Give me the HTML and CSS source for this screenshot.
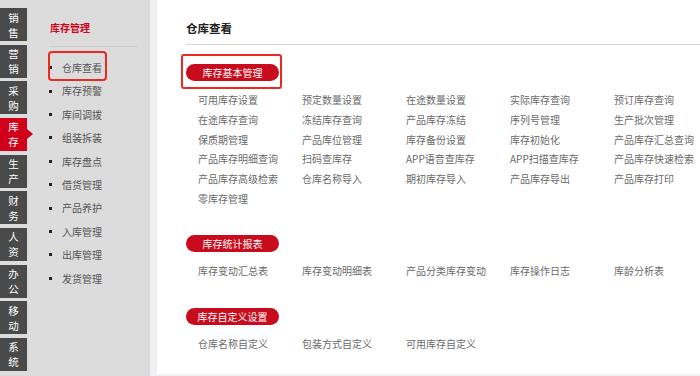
FILE: index.html
```html
<!DOCTYPE html>
<html lang="zh-CN">
<head>
  <meta charset="UTF-8" />
  <title>仓库查看</title>
  <link rel="stylesheet" href="styles.css">
</head>
<body>
  <div class="page">
    <aside class="nav">
      <ul class="tabs">
        <li>销<br>售</li>
        <li>营<br>销</li>
        <li>采<br>购</li>
        <li class="active">库<br>存</li>
        <li>生<br>产</li>
        <li>财<br>务</li>
        <li>人<br>资</li>
        <li>办<br>公</li>
        <li>移<br>动</li>
        <li>系<br>统</li>
      </ul>
      <div class="submenu">
        <h3>库存管理</h3>
        <ul>
          <li class="current">仓库查看</li>
          <li>库存预警</li>
          <li>库间调拨</li>
          <li>组装拆装</li>
          <li>库存盘点</li>
          <li>借货管理</li>
          <li>产品养护</li>
          <li>入库管理</li>
          <li>出库管理</li>
          <li>发货管理</li>
        </ul>
      </div>
    </aside>

    <main class="content">
      <h2>仓库查看</h2>

      <section class="group">
        <span class="pill focus">库存基本管理</span>
        <ul class="links">
          <li>可用库存设置</li>
          <li>预定数量设置</li>
          <li>在途数量设置</li>
          <li>实际库存查询</li>
          <li>预订库存查询</li>
          <li>在途库存查询</li>
          <li>冻结库存查询</li>
          <li>产品库存冻结</li>
          <li>序列号管理</li>
          <li>生产批次管理</li>
          <li>保质期管理</li>
          <li>产品库位管理</li>
          <li>库存备份设置</li>
          <li>库存初始化</li>
          <li>产品库存汇总查询</li>
          <li>产品库存明细查询</li>
          <li>扫码查库存</li>
          <li>APP语音查库存</li>
          <li>APP扫描查库存</li>
          <li>产品库存快速检索</li>
          <li>产品库存高级检索</li>
          <li>仓库名称导入</li>
          <li>期初库存导入</li>
          <li>产品库存导出</li>
          <li>产品库存打印</li>
          <li>零库存管理</li>
        </ul>
      </section>

      <section class="group">
        <span class="pill">库存统计报表</span>
        <ul class="links">
          <li>库存变动汇总表</li>
          <li>库存变动明细表</li>
          <li>产品分类库存变动</li>
          <li>库存操作日志</li>
          <li>库龄分析表</li>
        </ul>
      </section>

      <section class="group">
        <span class="pill">库存自定义设置</span>
        <ul class="links">
          <li>仓库名称自定义</li>
          <li>包装方式自定义</li>
          <li>可用库存自定义</li>
        </ul>
      </section>
    </main>
  </div>
</body>
</html>
```

FILE: styles.css
```css
body {
  margin: 0;
  font-family: "Noto Sans CJK SC", "Noto Sans", sans-serif;
  background-color: #f1f1f3;
}

ul {
  list-style: none;
  margin: 0;
  padding: 0;
}

.page {
  display: flex;
  height: 376px;
}

/* left navigation */
.nav {
  display: flex;
  flex-shrink: 0;
  width: 150px;
  background-color: #dcdcdc;
}

.tabs {
  display: flex;
  flex-direction: column;
  gap: 3.67px;
  width: 27px;
  padding-top: 8px;
}

.tabs li {
  position: relative;
  display: flex;
  align-items: center;
  justify-content: center;
  height: 33px;
  background-color: #4a4a4a;
  color: #fff;
  font-size: 10.5px;
  line-height: 15px;
  text-align: center;
}

.tabs li.active {
  background-color: #d0021b;
}

.tabs li.active::after {
  content: "";
  position: absolute;
  top: 50%;
  right: -6px;
  margin-top: -5px;
  border-top: 5px solid transparent;
  border-bottom: 5px solid transparent;
  border-left: 6px solid #d0021b;
}

.submenu {
  flex: 1;
  padding: 18px 12px 0 23px;
}

.submenu h3 {
  margin: 0;
  padding-bottom: 8px;
  border-bottom: 1px solid #cfcfcf;
  color: #d0021b;
  font-size: 10px;
  line-height: 20px;
}

.submenu ul {
  margin: 9px 0 0 -1px;
}

.submenu li {
  position: relative;
  display: flex;
  align-items: center;
  color: #555;
  font-size: 10px;
  line-height: 23.4px;
}

.submenu li::before {
  content: "";
  width: 3px;
  height: 3px;
  margin-right: 10px;
  background-color: #222;
}

.submenu li.current::after {
  content: "";
  position: absolute;
  top: -5px;
  bottom: -2px;
  left: -1px;
  width: 59px;
  border: 2px solid #ea2a1f;
  border-radius: 4px;
  box-sizing: border-box;
}

/* main content */
.content {
  flex: 1;
  min-width: 0;
  height: 374px;
  margin-left: 7px;
  padding: 18px 0 0 29px;
  background-color: #fff;
  box-sizing: border-box;
  overflow: hidden;
}

.content h2 {
  margin: 0;
  padding-bottom: 6px;
  border-bottom: 1px solid #d4d4d4;
  color: #222;
  font-size: 11.5px;
  line-height: 20px;
}

.group {
  margin-top: 26.5px;
}

.group:first-of-type {
  margin-top: 19px;
}

.pill {
  position: relative;
  display: block;
  width: 93px;
  height: 17px;
  border-radius: 9px;
  background-color: #c80c1e;
  color: #fff;
  font-size: 10px;
  line-height: 17px;
  text-align: center;
}

.pill.focus::after {
  content: "";
  position: absolute;
  top: -10px;
  left: -5px;
  right: -3px;
  bottom: -8px;
  border: 2px solid #ea2a1f;
  border-radius: 3px;
}

.links {
  display: grid;
  grid-template-columns: repeat(4, 104px) auto;
  margin-top: 9px;
  padding-left: 12px;
  color: #6a6a6a;
  font-size: 10px;
  line-height: 19.8px;
  white-space: nowrap;
}
```
